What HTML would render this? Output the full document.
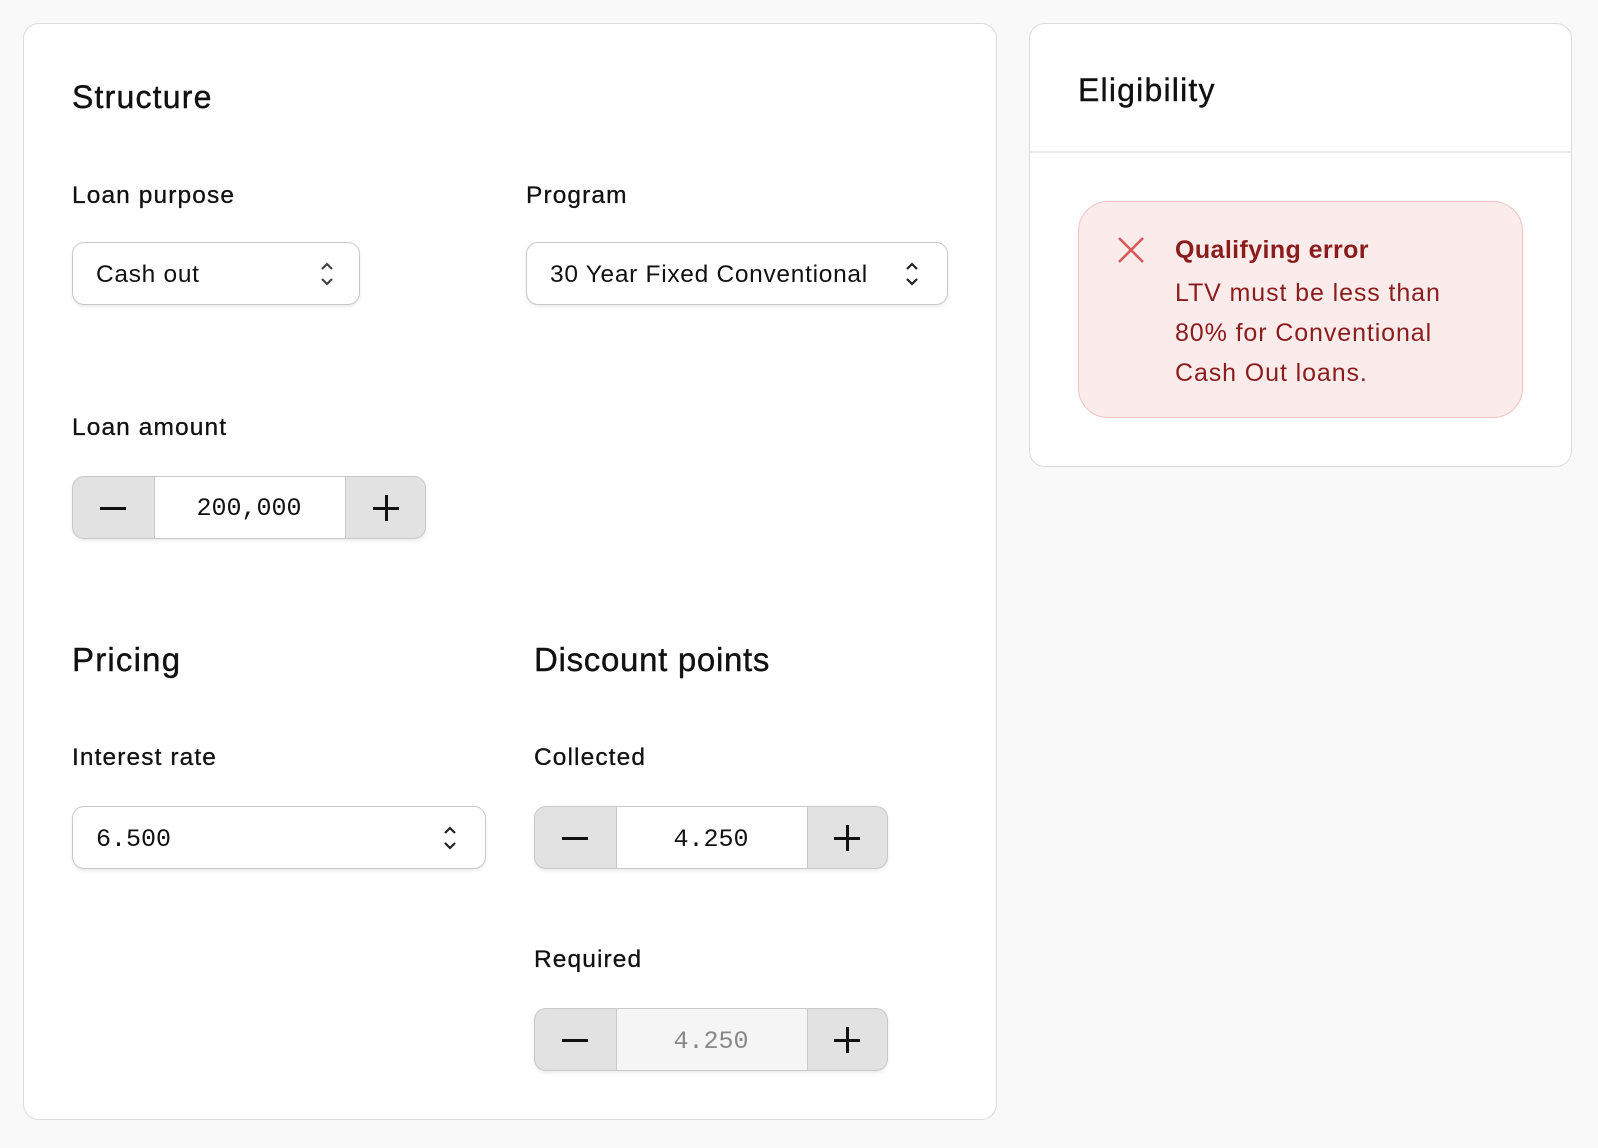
<!DOCTYPE html>
<html><head><meta charset="utf-8"><style>
*{box-sizing:border-box;margin:0;padding:0}
body{width:1598px;height:1148px;background:#f9f9f9;font-family:"Liberation Sans",sans-serif;color:#111;position:relative;overflow:hidden}
.a{position:absolute;line-height:1;white-space:nowrap}
.card{position:absolute;background:#fff;border:1.5px solid #dcdcdc;border-radius:16px}
.h{font-size:32px;letter-spacing:1.2px;-webkit-text-stroke:0.4px #111}
.l{font-size:24.5px;letter-spacing:1.1px;-webkit-text-stroke:0.3px #111}
.v{font-size:24.5px;letter-spacing:0.7px}
.sel{position:absolute;background:#fff;border:1.5px solid #c9c9c9;border-radius:12px;box-shadow:0 2px 3px rgba(0,0,0,.08)}
.step{position:absolute;border:1.5px solid #c9c9c9;border-radius:12px;overflow:hidden;background:#e2e2e2;box-shadow:0 2px 3px rgba(0,0,0,.08)}
.mid{position:absolute;top:0;bottom:0;background:#fff;border-left:1.5px solid #c9c9c9;border-right:1.5px solid #c9c9c9}
.mono{font-family:"Liberation Mono",monospace;font-size:25px}
.er{color:#8a1c1c;font-size:25px;letter-spacing:0.9px}
</style></head><body>
<div class="card" style="left:23px;top:23px;width:974px;height:1097px"></div>
<div class="card" style="left:1029px;top:23px;width:543px;height:444px"></div>
<div style="position:absolute;left:1030px;top:151px;width:541px;height:1.5px;background:#ececec"></div>

<div class="a h" style="left:72px;top:81px">Structure</div>
<div class="a l" style="left:72px;top:184px">Loan purpose</div>
<div class="a l" style="left:526px;top:184px">Program</div>

<div class="sel" style="left:72px;top:242px;width:288px;height:63px"></div>
<div class="a v" style="left:96px;top:263px">Cash out</div>
<svg class="a" style="left:320px;top:261px" width="14" height="26" viewBox="0 0 14 26"><path d="M2 8 L7 3 L12 8 M2 18 L7 23 L12 18" fill="none" stroke="#444" stroke-width="2.2"/></svg>

<div class="sel" style="left:526px;top:242px;width:422px;height:63px"></div>
<div class="a v" style="left:550px;top:263px">30 Year Fixed Conventional</div>
<svg class="a" style="left:905px;top:261px" width="14" height="26" viewBox="0 0 14 26"><path d="M2 8 L7 3 L12 8 M2 18 L7 23 L12 18" fill="none" stroke="#222" stroke-width="2.2"/></svg>

<div class="a l" style="left:72px;top:416px">Loan amount</div>
<div class="step" style="left:72px;top:476px;width:354px;height:63px"><div class="mid" style="left:81px;width:192px"></div></div>
<div class="a mono" style="left:72px;top:496px;width:354px;text-align:center">200,000</div>
<div class="a" style="left:100px;top:507px;width:26px;height:2.5px;background:#111"></div>
<div class="a" style="left:373px;top:507px;width:26px;height:2.5px;background:#111"></div>
<div class="a" style="left:385px;top:495px;width:2.5px;height:26px;background:#111"></div>

<div class="a h" style="left:72px;top:643px;font-size:33px">Pricing</div>
<div class="a h" style="left:534px;top:643px;font-size:33px;letter-spacing:0.7px">Discount points</div>
<div class="a l" style="left:72px;top:746px">Interest rate</div>
<div class="a l" style="left:534px;top:746px">Collected</div>

<div class="sel" style="left:72px;top:806px;width:414px;height:63px"></div>
<div class="a mono" style="left:96px;top:827px">6.500</div>
<svg class="a" style="left:443px;top:825px" width="14" height="26" viewBox="0 0 14 26"><path d="M2 8 L7 3 L12 8 M2 18 L7 23 L12 18" fill="none" stroke="#222" stroke-width="2.2"/></svg>

<div class="step" style="left:534px;top:806px;width:354px;height:63px"><div class="mid" style="left:81px;width:192px"></div></div>
<div class="a mono" style="left:616px;top:827px;width:190px;text-align:center">4.250</div>
<div class="a" style="left:562px;top:837px;width:26px;height:2.5px;background:#111"></div>
<div class="a" style="left:834px;top:837px;width:26px;height:2.5px;background:#111"></div>
<div class="a" style="left:846px;top:825px;width:2.5px;height:26px;background:#111"></div>

<div class="a l" style="left:534px;top:948px">Required</div>
<div class="step" style="left:534px;top:1008px;width:354px;height:63px"><div class="mid" style="left:81px;width:192px;background:#f5f5f5"></div></div>
<div class="a mono" style="left:616px;top:1029px;width:190px;text-align:center;color:#888">4.250</div>
<div class="a" style="left:562px;top:1039px;width:26px;height:2.5px;background:#111"></div>
<div class="a" style="left:834px;top:1039px;width:26px;height:2.5px;background:#111"></div>
<div class="a" style="left:846px;top:1027px;width:2.5px;height:26px;background:#111"></div>

<div class="a h" style="left:1078px;top:74px">Eligibility</div>
<div style="position:absolute;left:1078px;top:201px;width:445px;height:217px;background:#fcebeb;border:1.5px solid #f0c4c4;border-radius:30px"></div>
<svg class="a" style="left:1117px;top:236px" width="28" height="28" viewBox="0 0 28 28"><path d="M2 2 L26 26 M26 2 L2 26" stroke="#d65a5a" stroke-width="2.6" fill="none"/></svg>
<div class="a er" style="left:1175px;top:238px;font-weight:bold;letter-spacing:0.4px">Qualifying error</div>
<div class="a er" style="left:1175px;top:281px">LTV must be less than</div>
<div class="a er" style="left:1175px;top:321px">80% for Conventional</div>
<div class="a er" style="left:1175px;top:361px">Cash Out loans.</div>
</body></html>
